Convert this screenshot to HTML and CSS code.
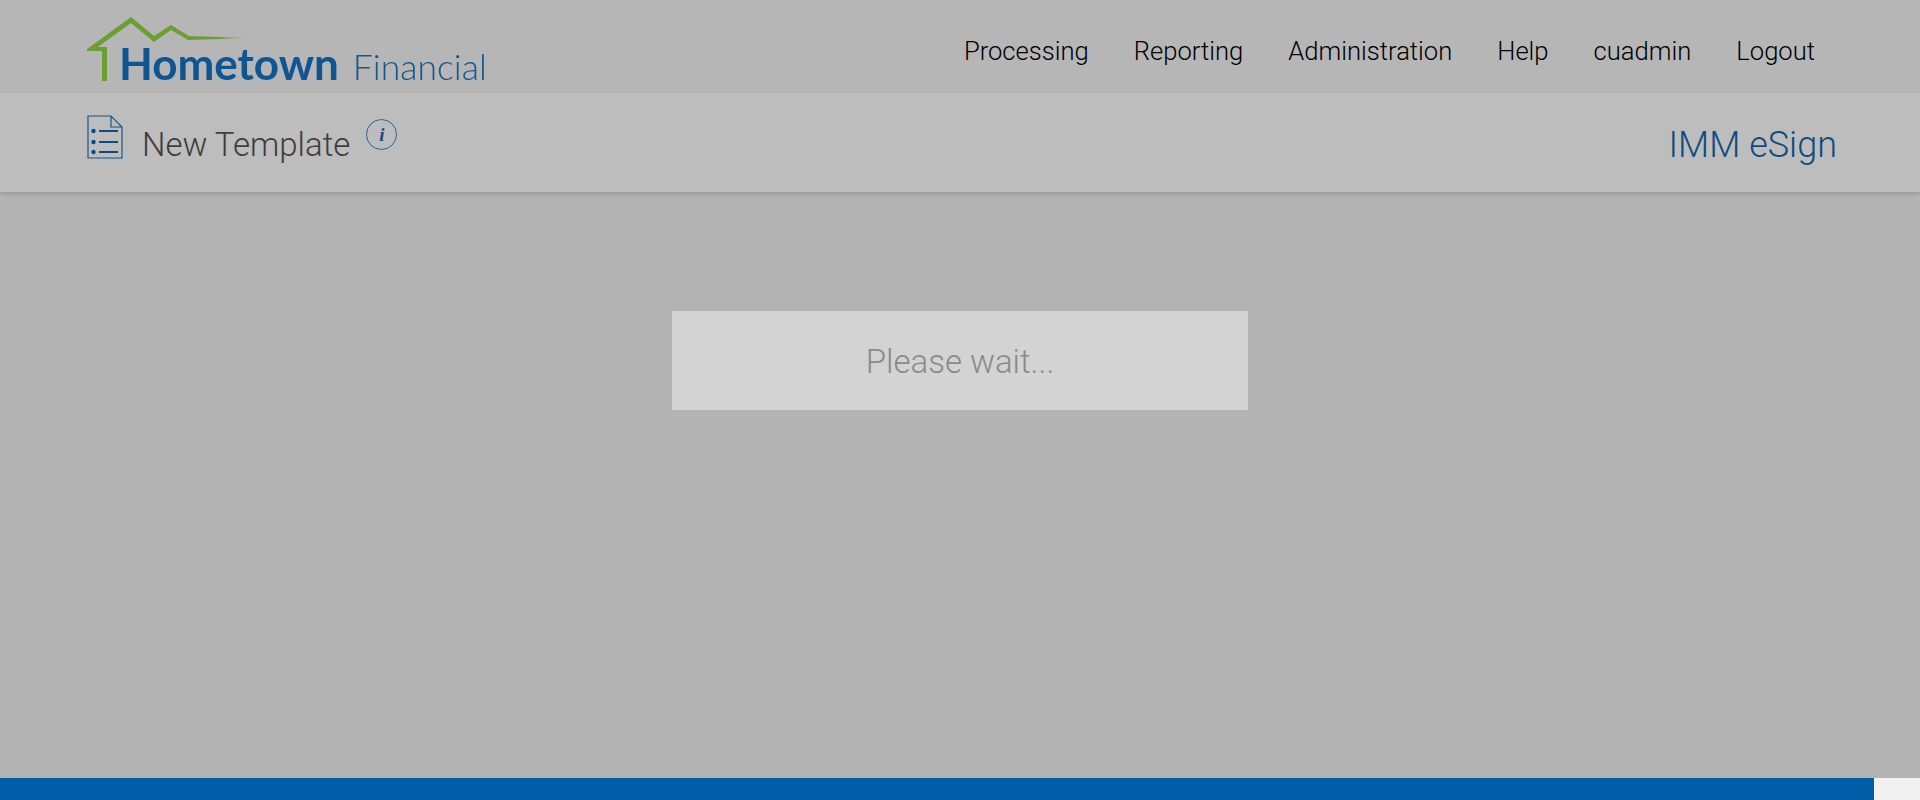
FILE: index.html
```html
<!DOCTYPE html>
<html lang="en">
<head>
<meta charset="utf-8">
<title>New Template</title>
<link rel="stylesheet" href="styles.css">
</head>
<body>
<div class="page">
  <header class="topbar">
    <div class="logo">
      <svg class="logo-house" width="180" height="90" viewBox="0 0 180 90">
        <defs>
          <linearGradient id="fade" x1="0" y1="0" x2="1" y2="0">
            <stop offset="0" stop-color="#6d9e34"/>
            <stop offset="0.8" stop-color="#6d9e34"/>
            <stop offset="1" stop-color="#6d9e34" stop-opacity="0"/>
          </linearGradient>
        </defs>
        <path d="M2 49 L46 17 L69 36 L86 25 L104 36 L166 38 L103 40 L86 30 L69 42 L46 23 L13 47 L22 47 L22 81 L17 81 L17 51 L2 51 Z" fill="url(#fade)"/>
      </svg>
      <span class="logo-name">Hometown</span>
      <span class="logo-sub">Financial</span>
    </div>
    <nav class="nav">
      <a>Processing</a>
      <a>Reporting</a>
      <a>Administration</a>
      <a>Help</a>
      <a>cuadmin</a>
      <a>Logout</a>
    </nav>
  </header>
  <section class="subbar">
    <svg class="doc-icon" width="36" height="45" viewBox="0 0 36 45" fill="none">
      <path d="M1 1 H24 L35 12 V43 H1 Z M24 1 V12 H35" stroke="#15568c" stroke-width="1.2"/>
      <circle cx="6.5" cy="16" r="2.2" fill="#0b4a82"/>
      <circle cx="6.5" cy="27" r="2.2" fill="#0b4a82"/>
      <circle cx="6.5" cy="37" r="2.2" fill="#0b4a82"/>
      <path d="M12 16 H31 M12 27 H31 M12 37 H31" stroke="#0b4a82" stroke-width="2"/>
    </svg>
    <h1 class="title">New Template</h1>
    <span class="info"><i>i</i></span>
    <span class="product">IMM eSign</span>
  </section>
  <main class="content">
    <div class="wait">Please wait...</div>
  </main>
  <footer class="footer">
    <div class="footer-blue"></div>
    <div class="footer-end"></div>
  </footer>
</div>
</body>
</html>
```

FILE: styles.css
```css
* { box-sizing: border-box; }
html, body { margin: 0; height: 100%; }
body { font-family: Roboto, "Liberation Sans", sans-serif; font-weight: 300; overflow: hidden; }
.page { height: 800px; display: flex; flex-direction: column; background: #b3b3b3; }

.topbar { height: 93px; flex: none; display: flex; justify-content: space-between; align-items: flex-start; padding: 0 105px 0 87px; background: #b6b6b6; }
.logo { position: relative; width: 420px; height: 93px; filter: blur(0.6px); display: flex; align-items: baseline; padding: 37px 0 0 32px; }
.logo-house { position: absolute; left: -2px; top: 0; overflow: visible; }
.logo-name { font-family: Lato, sans-serif; font-weight: 700; font-size: 44px; line-height: 53px; color: #0f5592; }
.logo-sub { font-family: Lato, sans-serif; font-weight: 300; font-size: 35.6px; line-height: 53px; color: #14568f; margin-left: 14px; }

.nav { display: flex; gap: 45px; padding-top: 35px; font-size: 25.6px; line-height: 32px; color: #000; }

.subbar { height: 99px; flex: none; display: flex; align-items: flex-start; background: #bdbdbd; padding: 0 83px 0 87px; box-shadow: 0 2px 4px rgba(0, 0, 0, 0.15); position: relative; }
.doc-icon { margin-top: 22px; flex: none; }
.title { margin: 30px 0 0 19px; font-size: 33px; font-weight: 300; line-height: 44px; color: #3e3e3e; }
.info { margin: 26px 0 0 16px; width: 31px; height: 31px; border: 1px solid #2c6496; border-radius: 50%; display: flex; align-items: center; justify-content: center; }
.info i { font-family: "Liberation Serif", serif; font-weight: 700; font-size: 19px; color: #0f4f86; line-height: 1; }
.product { margin: 29px 0 0 auto; font-size: 36px; line-height: 46px; color: #0f4c81; }

.content { flex: 1; display: flex; justify-content: center; align-items: flex-start; padding-top: 119px; }
.wait { width: 576px; height: 99px; background: #d3d3d3; color: #8a8a8a; font-size: 33px; line-height: 101px; text-align: center; }

.footer { height: 22px; flex: none; display: flex; }
.footer-blue { flex: 1; background: #005da6; }
.footer-end { width: 46px; background: #f0f0f0; }
```
